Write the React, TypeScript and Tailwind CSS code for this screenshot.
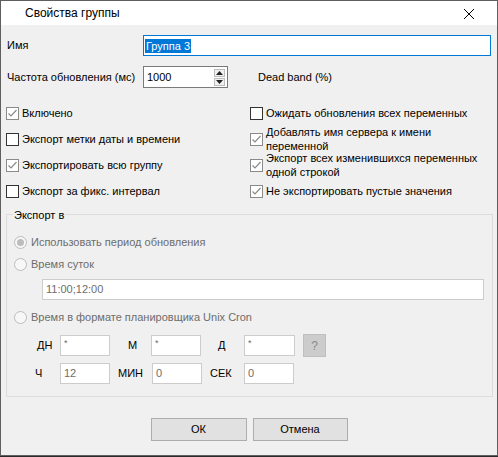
import React from "react";

const font = { fontFamily: '"Liberation Sans", Arial, sans-serif' };

function Check({ on, children }: { on?: boolean; children: React.ReactNode }) {
  return (
    <div className="flex items-center h-[26px]">
      <span
        className={`w-[13px] h-[13px] shrink-0 border bg-white flex items-center justify-center ${
          on ? "border-[#8a8a8a]" : "border-[#333333]"
        }`}
      >
        {on && (
          <svg width="11" height="11" viewBox="0 0 11 11">
            <path d="M1.5 5.5 L4 8 L9.5 2" fill="none" stroke="#8a8a8a" strokeWidth="1.2" />
          </svg>
        )}
      </span>
      <span className="ml-[3px] leading-[14px]">{children}</span>
    </div>
  );
}

function Radio({ on, children }: { on?: boolean; children: React.ReactNode }) {
  return (
    <div className="flex items-center h-[14px] text-[#6d6d6d]">
      <span className="w-[13px] h-[13px] rounded-full border border-[#bcbcbc] bg-[#f7f7f7] flex items-center justify-center">
        {on && <span className="w-[7px] h-[7px] rounded-full bg-[#bcbcbc]" />}
      </span>
      <span className="ml-[4px]">{children}</span>
    </div>
  );
}

function Field({ w, value, star }: { w: string; value?: string; star?: boolean }) {
  return (
    <div className={`${w} h-[21px] border border-[#cccccc] bg-white flex items-center pl-[3px] text-[#6d6d6d]`}>
      {star ? <span className="self-start text-[9px] leading-[9px] mt-[3px]">*</span> : value}
    </div>
  );
}

export default function App() {
  return (
    <div className="w-[498px] h-[457px] bg-[#2a2a2a] text-[11px] text-black" style={font}>
      <div className="h-[456px] border border-[#5f5f5f] bg-[#f0f0f0] flex flex-col">
        <div className="h-[24px] bg-white flex items-center justify-between">
          <span className="ml-[24px] text-[12px]">Свойства группы</span>
          <svg width="12" height="12" viewBox="0 0 12 12" className="mr-[22px] mt-[2px]">
            <path d="M1 1 L11 11 M11 1 L1 11" stroke="#000" strokeWidth="1" />
          </svg>
        </div>

        <div className="flex items-center mt-[10px] pl-[6px]">
          <span className="w-[136px]">Имя</span>
          <div className="w-[348px] h-[21px] border border-[#0078d7] bg-white flex items-center pl-[1px]">
            <span className="bg-[#0078d7] text-white px-[1px] leading-[14px]">Группа 3</span>
          </div>
        </div>

        <div className="flex items-center mt-[10px] pl-[6px]">
          <span className="w-[136px]">Частота обновления (мс)</span>
          <div className="w-[85px] h-[22px] border border-[#7a7a7a] bg-white flex items-center justify-between pl-[3px] pr-[2px]">
            <span>1000</span>
            <div className="flex flex-col gap-[1px]">
              <span className="w-[11px] h-[8px] bg-[#f0f0f0] border border-[#bdbdbd] flex items-center justify-center">
                <svg width="7" height="4" viewBox="0 0 7 4"><path d="M0 4 L3.5 0 L7 4Z" fill="#222" /></svg>
              </span>
              <span className="w-[11px] h-[8px] bg-[#f0f0f0] border border-[#bdbdbd] flex items-center justify-center">
                <svg width="7" height="4" viewBox="0 0 7 4"><path d="M0 0 L3.5 4 L7 0Z" fill="#222" /></svg>
              </span>
            </div>
          </div>
          <span className="ml-[30px]">Dead band (%)</span>
        </div>

        <div className="grid grid-cols-[244px_1fr] mt-[12px] pl-[5px]">
          <Check on>Включено</Check>
          <Check>Ожидать обновления всех переменных</Check>
          <Check>Экспорт метки даты и времени</Check>
          <Check on>
            Добавлять имя сервера к имени
            <br />
            переменной
          </Check>
          <Check on>Экспортировать всю группу</Check>
          <Check on>
            Экспорт всех изменившихся переменных
            <br />
            одной строкой
          </Check>
          <Check>Экспорт за фикс. интервал</Check>
          <Check on>Не экспортировать пустые значения</Check>
        </div>

        <div className="relative ml-[5px] mt-[10px] w-[487px] h-[183px] border border-[#dcdcdc]">
          <span className="absolute -top-[8px] left-[6px] px-[1px] bg-[#f0f0f0]">Экспорт в</span>
          <div className="pl-[7px] pt-[20px] flex flex-col">
            <Radio on>Использовать период обновления</Radio>
            <div className="mt-[8px]">
              <Radio>Время суток</Radio>
            </div>
            <div className="mt-[8px] ml-[28px]">
              <Field w="w-[442px]" value="11:00;12:00" />
            </div>
            <div className="mt-[10px]">
              <Radio>Время в формате планировщика Unix Cron</Radio>
            </div>
            <div className="flex items-center mt-[10px] ml-[16px]">
              <span className="w-[30px] pl-[7px]">ДН</span>
              <Field w="w-[50px]" star />
              <span className="w-[41px] pl-[18px]">М</span>
              <Field w="w-[50px]" star />
              <span className="w-[43px] pl-[17px]">Д</span>
              <Field w="w-[51px]" star />
              <span className="ml-[8px] w-[23px] h-[23px] bg-[#cccccc] border border-[#bfbfbf] flex items-center justify-center text-[#8a8a8a] text-[12px]">
                ?
              </span>
            </div>
            <div className="flex items-center mt-[6px] ml-[16px]">
              <span className="w-[30px] pl-[5px]">Ч</span>
              <Field w="w-[50px]" value="12" />
              <span className="w-[42px] pl-[8px]">МИН</span>
              <Field w="w-[50px]" value="0" />
              <span className="w-[42px] pl-[8px]">СЕК</span>
              <Field w="w-[50px]" value="0" />
            </div>
          </div>
        </div>

        <div className="flex justify-center gap-[6px] mt-[21px]">
          <button className="w-[96px] h-[23px] bg-[#e1e1e1] border border-[#adadad]">ОК</button>
          <button className="w-[95px] h-[23px] bg-[#e1e1e1] border border-[#adadad]">Отмена</button>
        </div>
      </div>
    </div>
  );
}
